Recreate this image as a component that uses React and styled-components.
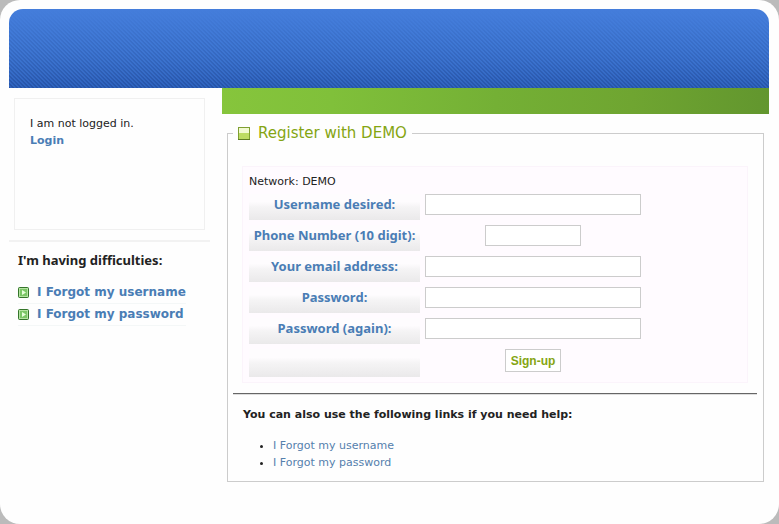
import React from 'react'
import styled, { createGlobalStyle } from 'styled-components'

const GlobalStyle = createGlobalStyle`
  * {
    box-sizing: border-box;
  }
  body {
    margin: 0;
    background: #bbb;
    color: #222;
    font: 11px/17px Verdana, "DejaVu Sans", sans-serif;
  }
`

const Page = styled.div`
  min-height: 100vh;
  padding: 9px 10px 9px 9px;
  border-radius: 20px;
  background: #fefefe;
`

const Banner = styled.header`
  height: 79px;
  border-radius: 14px 14px 0 0;
  background:
    linear-gradient(#447ddb, rgba(64, 121, 214, 0.6) 35%, transparent),
    linear-gradient(45deg, rgba(0, 20, 80, 0.2) 25%, transparent 25% 50%, rgba(0, 20, 80, 0.2) 50% 75%, transparent 75%) 0 0 / 4px 4px,
    linear-gradient(#447ddb, #4079d6 35%, #2f63bd);
`

const Columns = styled.div`
  display: grid;
  grid-template-columns: 201px 1fr;
  gap: 12px;
`

const Sidebar = styled.aside`
  padding-top: 10px;
`

const LoginBox = styled.div`
  height: 132px;
  margin: 0 5px 10px;
  padding: 16px 15px;
  border: 1px solid #f0f0f0;

  p {
    margin: 0;
  }
`

const Link = styled.a`
  color: ${({ $strong }) => ($strong ? '#4a7db5' : '#5580ad')};
  font-weight: ${({ $strong }) => ($strong ? 'bold' : 'normal')};
  text-decoration: none;
`

const Help = styled.nav`
  padding: 9px 9px 0;
  border-top: 2px solid #f2f2f2;
`

const HelpTitle = styled.h2`
  margin: 0 0 13px;
  font: bold 13px/18px Tahoma, "Noto Sans", sans-serif;
`

const HelpList = styled.ul`
  width: 168px;
  margin: 0;
  padding: 0;
  list-style: none;
  font-size: 12px;

  li {
    display: flex;
    align-items: center;
    gap: 8px;
    height: 22px;
    border-bottom: 1px solid #f4f7f7;
    white-space: nowrap;
  }
  svg {
    flex: none;
  }
`

const GreenBar = styled.div`
  height: 26px;
  background: linear-gradient(90deg, #86c53c, #80c03a 20%, #74b035 50%, #6fa531 75%, #62962e);
`

const Panel = styled.fieldset`
  margin: 9px 5px 0;
  padding: 23px 6px 10px 5px;
  border: 1px solid #ccc;
`

const Legend = styled.legend`
  display: flex;
  align-items: center;
  gap: 8px;
  padding: 0 5px;
  color: #85a512;
  font-size: 15px;
  line-height: 20px;
`

const Form = styled.form`
  margin: 0 9px;
  padding: 6px 6px 5px;
  border: 1px solid #fbf4fb;
  background: #fffbff;

  p {
    margin: 0 0 4px;
  }
`

const Row = styled.div`
  display: grid;
  grid-template-columns: 171px 216px;
  gap: 5px;
  justify-items: center;
  margin-bottom: 5px;

  &:last-child {
    margin-bottom: 0;
  }
`

const Label = styled.label`
  justify-self: stretch;
  min-height: ${({ $tall }) => ($tall ? '28px' : '26px')};
  background: linear-gradient(#fefcfe 30%, #f5f4f5 50%, #eae9ea);
  color: #4a7db5;
  font: bold 13px/20px Tahoma, "Noto Sans", sans-serif;
  text-align: center;
  white-space: nowrap;
`

const Input = styled.input`
  width: ${({ $short }) => ($short ? '96px' : '100%')};
  height: 21px;
  padding: 0 4px;
  border: 1px solid #ccc;
  background: #fff;
  font: inherit;
`

const Button = styled.button`
  height: 23px;
  padding: 0 5px;
  border: 1px solid #ccc;
  background: #fff;
  color: #85a512;
  font: bold 12px "Liberation Sans", Arial, sans-serif;
`

const Rule = styled.hr`
  height: 2px;
  margin: 10px 0 11px;
  border: 0;
  border-top: 1px solid #666;
  border-bottom: 1px solid #ddd;
`

const MoreHelp = styled.section`
  padding: 0 10px;

  h3 {
    margin: 0 0 14px;
    font-size: 11px;
    line-height: 17px;
  }
  ul {
    margin: 0;
    padding-left: 30px;
  }
`

const ArrowIcon = () => (
  <svg width="11" height="11" viewBox="0 0 11 11" aria-hidden="true">
    <rect x="0.5" y="0.5" width="10" height="10" rx="1" fill="#7cc667" stroke="#34752a" />
    <rect x="1.5" y="1.5" width="8" height="8" fill="none" stroke="#b5e3a2" />
    <path d="M4 3v5l4-2.500z" fill="#e8ffdc" />
  </svg>
)

const SquareIcon = () => (
  <svg width="12" height="13" viewBox="0 0 12 13" aria-hidden="true">
    <rect x="0.5" y="0.5" width="11" height="12" fill="#f2fad2" stroke="#7f9f32" />
    <rect x="1" y="6" width="10" height="6" fill="#bddc62" />
    <path d="M0 12.500h12" stroke="#5f7d22" />
  </svg>
)

const fields = [
  { id: 'username', label: 'Username desired:', type: 'text' },
  { id: 'phone', label: 'Phone Number (10 digit):', type: 'tel', short: true },
  { id: 'email', label: 'Your email address:', type: 'email' },
  { id: 'password', label: 'Password:', type: 'password' },
  { id: 'password2', label: 'Password (again):', type: 'password' },
]

const helpLinks = ['I Forgot my username', 'I Forgot my password']

const App = () => (
  <>
    <GlobalStyle />
    <Page>
      <Banner />
      <Columns>
        <Sidebar>
          <LoginBox>
            <p>I am not logged in.</p>
            <Link href="#login" $strong>Login</Link>
          </LoginBox>
          <Help>
            <HelpTitle>I'm having difficulties:</HelpTitle>
            <HelpList>
              {helpLinks.map(text => (
                <li key={text}>
                  <ArrowIcon />
                  <Link href="#forgot" $strong>{text}</Link>
                </li>
              ))}
            </HelpList>
          </Help>
        </Sidebar>
        <main>
          <GreenBar />
          <Panel>
            <Legend><SquareIcon /> Register with DEMO</Legend>
            <Form onSubmit={e => e.preventDefault()}>
              <p>Network: DEMO</p>
              {fields.map(f => (
                <Row key={f.id}>
                  <Label htmlFor={f.id}>{f.label}</Label>
                  <Input id={f.id} type={f.type} $short={f.short} />
                </Row>
              ))}
              <Row>
                <Label as="span" $tall />
                <Button type="submit">Sign-up</Button>
              </Row>
            </Form>
            <Rule />
            <MoreHelp>
              <h3>You can also use the following links if you need help:</h3>
              <ul>
                {helpLinks.map(text => (
                  <li key={text}><Link href="#forgot">{text}</Link></li>
                ))}
              </ul>
            </MoreHelp>
          </Panel>
        </main>
      </Columns>
    </Page>
  </>
)

export default App
